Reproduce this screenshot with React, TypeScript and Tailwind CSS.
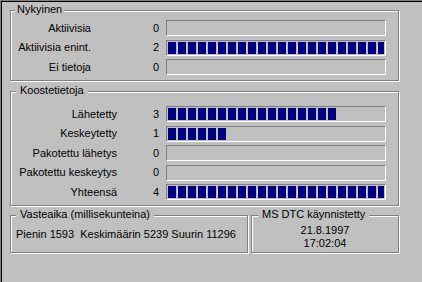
import type { ReactNode } from "react"

const font = { fontFamily: '"Liberation Sans", Arial, sans-serif' }

type Stat = { label: string; value: number }

const current: Stat[] = [
  { label: "Aktiivisia", value: 0 },
  { label: "Aktiivisia enint.", value: 2 },
  { label: "Ei tietoja", value: 0 },
]

const totals: Stat[] = [
  { label: "Lähetetty", value: 3 },
  { label: "Keskeytetty", value: 1 },
  { label: "Pakotettu lähetys", value: 0 },
  { label: "Pakotettu keskeytys", value: 0 },
  { label: "Yhteensä", value: 4 },
]

const BAR_INNER = 216

function Bar({ value, max }: { value: number; max: number }) {
  const fill = max > 0 ? (value / max) * BAR_INNER : 0
  const blocks = Math.ceil(fill / 10)
  return (
    <div className="w-[220px] h-[16px] p-px border border-t-[#808080] border-l-[#808080] border-b-white border-r-white overflow-hidden">
      <div className="flex gap-[2px] h-full overflow-hidden">
        {Array.from({ length: blocks }).map((_, i) => (
          <div key={i} className="w-[8px] h-full shrink-0 bg-[#000080]" />
        ))}
      </div>
    </div>
  )
}

function Group({
  title,
  titleClass,
  className,
  children,
}: {
  title: string
  titleClass: string
  className: string
  children: ReactNode
}) {
  return (
    <div
      className={`relative border border-[#808080] shadow-[inset_1px_1px_0_#fff,1px_1px_0_#fff] ${className}`}
    >
      <span className={`absolute top-[-8px] leading-[13px] bg-[#c0c0c0] whitespace-nowrap ${titleClass}`}>
        {title}
      </span>
      {children}
    </div>
  )
}

function StatRows({ rows, max, labelW, numW }: { rows: Stat[]; max: number; labelW: string; numW: string }) {
  return (
    <div className="flex flex-col gap-y-[3.5px]">
      {rows.map((r) => (
        <div key={r.label} className="flex items-center h-[16px]">
          <span className={`${labelW} text-right whitespace-nowrap leading-[13px]`}>{r.label}</span>
          <span className={`${numW} text-right leading-[13px]`}>{r.value}</span>
          <div className="ml-[7px]">
            <Bar value={r.value} max={max} />
          </div>
        </div>
      ))}
    </div>
  )
}

export default function App() {
  return (
    <div
      className="w-[422px] h-[282px] overflow-hidden bg-[#c0c0c0] border-t border-l border-[#808080] text-[11px] text-black"
      style={font}
    >
      <div className="h-full border-t border-l border-black pl-[8px] pt-[8px]">
        <Group title="Nykyinen" titleClass="left-[4px] px-[2px]" className="w-[389px] h-[71px] pt-[9px]">
          <StatRows rows={current} max={2} labelW="w-[80px]" numW="w-[68px]" />
        </Group>

        <Group title="Koostetietoja" titleClass="left-[5px] px-[4px]" className="mt-[10px] w-[389px] h-[115px] pt-[14px]">
          <StatRows rows={totals} max={4} labelW="w-[106px]" numW="w-[42px]" />
        </Group>

        <div className="flex mt-[9px]">
          <Group
            title="Vasteaika (millisekunteina)"
            titleClass="left-[5px] px-[4px]"
            className="w-[238px] h-[38px] flex items-center pl-[5px]"
          >
            <span className="whitespace-pre leading-[13px]">Pienin 1593  Keskimäärin 5239 Suurin 11296</span>
          </Group>
          <Group
            title="MS DTC käynnistetty"
            titleClass="left-[6px] px-[4px]"
            className="ml-[3px] w-[148px] h-[38px] flex flex-col items-center pt-[8px]"
          >
            <span className="leading-[13px]">21.8.1997</span>
            <span className="leading-[13px]">17:02:04</span>
          </Group>
        </div>
      </div>
    </div>
  )
}
